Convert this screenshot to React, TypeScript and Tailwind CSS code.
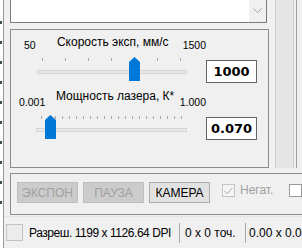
import React from "react";

const F = { fontFamily: '"Liberation Sans", Arial, sans-serif' };
const FB = { fontFamily: '"DejaVu Sans", Verdana, sans-serif' };

function SliderGfx({ ticks, t0, dt, trackL, trackW, thumbL }: { ticks: number; t0: number; dt: number; trackL: number; trackW: number; thumbL: number }) {
  const arr = Array.from({ length: ticks }, (_, i) => t0 + i * dt);
  return (
    <svg width="195" height="25" viewBox="0 0 195 25" className="block">
      {arr.map((x, i) => (
        <rect key={i} x={Math.round(x)} y={1} width={1} height={3} fill="#a8a8a8" />
      ))}
      <rect x={trackL + 0.5} y={13.5} width={trackW - 1} height={3} fill="#e7e7e7" stroke="#d6d6d6" />
      <path d={`M${thumbL} 5 L${thumbL + 5.5} 0 L${thumbL + 11} 5 V24 H${thumbL} Z`} fill="#0078d7" />
    </svg>
  );
}

export default function App() {
  const marks = [23, 43, 63, 84, 104, 126, 147, 167, 210, 230];
  return (
    <div className="w-[302px] h-[248px] overflow-hidden bg-[#f0f0f0] flex text-black" style={F}>
      {/* left strip */}
      <div className="w-[4px] h-full shrink-0 bg-white border-r border-[#9a9a9a] flex flex-col">
        {marks.map((m, i) => (
          <div key={i} className={i === 0 ? "mt-[21px] w-[2px] h-[3px] bg-[#3c5050]" : "mt-[17px] w-[2px] h-[3px] bg-[#3c5050]"} />
        ))}
      </div>

      {/* main */}
      <div className="flex-1 flex flex-col">
        <div className="flex h-[174px]">
          <div className="ml-[6px] w-[259px] flex flex-col">
            {/* white list box */}
            <div className="w-[257px] h-[23px] bg-white border-x border-b border-[#7a7a7a] flex justify-end">
              <div className="w-[17px] h-full bg-[#f0f0f0] flex justify-center">
                <svg width="9" height="6" viewBox="0 0 9 6" className="mt-[8px]">
                  <path d="M0.5 0.5 L4.5 4.5 L8.5 0.5" fill="none" stroke="#a6a6a6" strokeWidth="1" />
                </svg>
              </div>
            </div>
            {/* group box */}
            <div className="mt-[6px] w-[259px] h-[139px] border border-[#8c8c8c] flex flex-col">
              {/* slider 1 */}
              <div className="mt-[5px] flex items-start">
                <div className="w-[195px] flex flex-col">
                  <div className="h-[15px] flex items-start">
                    <span className="ml-[13px] w-[33px] mt-[4px] text-[10.5px] leading-[12px]">50</span>
                    <span className="w-[126px] text-[12px] leading-[14px]">Скорость эксп, мм/с</span>
                    <span className="mt-[4px] text-[10.5px] leading-[12px]">1500</span>
                  </div>
                  <div className="mt-[7px]">
                    <SliderGfx ticks={7} t0={31} dt={23} trackL={26} trackW={150} thumbL={118} />
                  </div>
                </div>
                <div className="mt-[25px] w-[51px] h-[23px] bg-white border border-[#646464] flex items-center justify-center text-[13px] font-bold" style={FB}>
                  1000
                </div>
              </div>
              {/* slider 2 */}
              <div className="mt-[6px] flex items-start">
                <div className="w-[195px] flex flex-col">
                  <div className="h-[15px] flex items-start">
                    <span className="ml-[8px] w-[37px] mt-[7px] text-[10.5px] leading-[12px]">0.001</span>
                    <span className="w-[124px] text-[12px] leading-[14px]">Мощность лазера, К*</span>
                    <span className="mt-[7px] text-[10.5px] leading-[12px]">1.000</span>
                  </div>
                  <div className="mt-[11px]">
                    <SliderGfx ticks={21} t0={30} dt={7} trackL={25} trackW={151} thumbL={34} />
                  </div>
                </div>
                <div className="mt-[28px] w-[51px] h-[23px] bg-white border border-[#646464] flex items-center justify-center text-[13px] font-bold" style={FB}>
                  0.070
                </div>
              </div>
            </div>
          </div>
          {/* right vertical bar */}
          <div className="ml-[6px] w-[19px] h-[168px] bg-[#e6e6e6] border-x border-[#cfcfcf]" />
          <div className="ml-[2px] w-[1px] h-[168px] bg-[#a0a0a0]" />
        </div>

        {/* bottom group */}
        <div className="ml-[6px] w-[300px] h-[42px] border-t border-l border-b border-[#8c8c8c] flex items-start shrink-0">
          <div className="ml-[6px] mt-[8px] w-[61px] h-[21px] bg-[#cccccc] border border-[#bfbfbf] text-[#a0a0a0] text-[12px] flex items-center justify-center">ЭКСПОН</div>
          <div className="ml-[5px] mt-[8px] w-[61px] h-[21px] bg-[#cccccc] border border-[#bfbfbf] text-[#a0a0a0] text-[12px] flex items-center justify-center">ПАУЗА</div>
          <div className="ml-[5px] mt-[8px] w-[61px] h-[21px] bg-[#e1e1e1] border border-[#adadad] text-black text-[12px] flex items-center justify-center">КАМЕРА</div>
          <div className="ml-[12px] mt-[10px] w-[13px] h-[13px] bg-[#f5f5f5] border border-[#c4c4c4] flex items-center justify-center">
            <svg width="9" height="8" viewBox="0 0 9 8">
              <path d="M0.5 4 L3.2 6.8 L8.5 0.8" fill="none" stroke="#a8a8a8" strokeWidth="1" />
            </svg>
          </div>
          <span className="ml-[5px] mt-[9px] text-[12px] leading-[14px] text-[#a0a0a0]">Негат.</span>
          <div className="ml-[16px] mt-[10px] w-[13px] h-[13px] bg-white border border-[#9a9a9a] shrink-0" />
        </div>

        {/* status bar */}
        <div className="mt-[1px] h-[32px] flex items-center border-t border-[#e3e3e3] whitespace-nowrap text-[12px]">
          <div className="ml-[2px] w-[17px] h-[17px] bg-[#ececec] border border-[#c3c3c3] shrink-0" />
          <div className="w-[156px] shrink-0 pl-[6px] overflow-hidden">
            <span className="tracking-[-0.45px]">Разреш. 1199 x 1126.64 DPI</span>
          </div>
          <div className="w-[1px] h-[20px] bg-[#a8a8a8] shrink-0" />
          <div className="w-[65px] shrink-0 pl-[5px]">
            <span>0 x 0 точ.</span>
          </div>
          <div className="w-[1px] h-[20px] bg-[#a8a8a8] shrink-0" />
          <div className="pl-[3px] shrink-0">
            <span>0.00 x 0.00 мм</span>
          </div>
        </div>
      </div>
    </div>
  );
}
